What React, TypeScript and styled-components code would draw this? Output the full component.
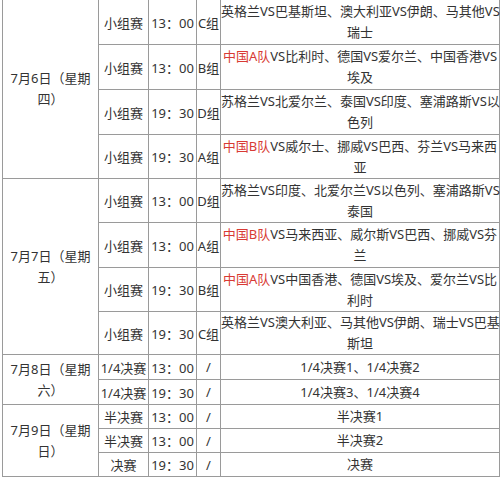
import React from "react";
import styled, { createGlobalStyle } from "styled-components";

const Global = createGlobalStyle`
  html, body { margin: 0; padding: 0; background: #ffffff; }
  body { font-family: "Noto Sans", "Noto Sans CJK SC", sans-serif; }
`;

const Table = styled.table`
  border-collapse: collapse;
  table-layout: fixed;
  width: 497px;
  margin: -1px 0 0 2px;
  font-family: "Noto Sans", "Noto Sans CJK SC", sans-serif;
  font-size: 13px;
  color: #333333;
`;

const Row = styled.tr<{ $h: number }>`
  height: ${(p) => p.$h}px;
`;

const Cell = styled.td`
  border: 1px solid #9a9a9a;
  padding: 0;
  text-align: center;
  vertical-align: middle;
  white-space: nowrap;
  overflow: visible;
  font-size: 13px;
`;

const Line = styled.div`
  display: block;
  height: 21px;
  line-height: 21px;
`;

const Red = styled.span`
  color: #d83a34;
`;

type Match = {
  stage: string;
  time: string;
  group: string;
  lines: React.ReactNode[];
  h: number;
};

type Day = { date: [string, string]; matches: Match[] };

const days: Day[] = [
  {
    date: ["7月6日（星期", "四）"],
    matches: [
      { stage: "小组赛", time: "13：00", group: "C组", h: 45, lines: ["英格兰VS巴基斯坦、澳大利亚VS伊朗、马其他VS", "瑞士"] },
      { stage: "小组赛", time: "13：00", group: "B组", h: 45, lines: [<><Red>中国A队</Red>VS比利时、德国VS爱尔兰、中国香港VS</>, "埃及"] },
      { stage: "小组赛", time: "19：30", group: "D组", h: 45, lines: ["苏格兰VS北爱尔兰、泰国VS印度、塞浦路斯VS以", "色列"] },
      { stage: "小组赛", time: "19：30", group: "A组", h: 44, lines: [<><Red>中国B队</Red>VS威尔士、挪威VS巴西、芬兰VS马来西</>, "亚"] },
    ],
  },
  {
    date: ["7月7日（星期", "五）"],
    matches: [
      { stage: "小组赛", time: "13：00", group: "D组", h: 44, lines: ["苏格兰VS印度、北爱尔兰VS以色列、塞浦路斯VS", "泰国"] },
      { stage: "小组赛", time: "13：00", group: "A组", h: 45, lines: [<><Red>中国B队</Red>VS马来西亚、威尔斯VS巴西、挪威VS芬</>, "兰"] },
      { stage: "小组赛", time: "19：30", group: "B组", h: 44, lines: [<><Red>中国A队</Red>VS中国香港、德国VS埃及、爱尔兰VS比</>, "利时"] },
      { stage: "小组赛", time: "19：30", group: "C组", h: 43, lines: ["英格兰VS澳大利亚、马其他VS伊朗、瑞士VS巴基", "斯坦"] },
    ],
  },
  {
    date: ["7月8日（星期", "六）"],
    matches: [
      { stage: "1/4决赛", time: "13：00", group: "/", h: 25, lines: ["1/4决赛1、1/4决赛2"] },
      { stage: "1/4决赛", time: "19：30", group: "/", h: 25, lines: ["1/4决赛3、1/4决赛4"] },
    ],
  },
  {
    date: ["7月9日（星期", "日）"],
    matches: [
      { stage: "半决赛", time: "13：00", group: "/", h: 24, lines: ["半决赛1"] },
      { stage: "半决赛", time: "13：00", group: "/", h: 24, lines: ["半决赛2"] },
      { stage: "决赛", time: "19：30", group: "/", h: 24, lines: ["决赛"] },
    ],
  },
];

const Lines: React.FC<{ lines: React.ReactNode[] }> = ({ lines }) => (
  <>
    {lines.map((l, i) => (
      <Line key={i}>{l}</Line>
    ))}
  </>
);

export default function App() {
  return (
    <>
      <Global />
      <Table>
        <colgroup>
          <col style={{ width: 96 }} />
          <col style={{ width: 50 }} />
          <col style={{ width: 48 }} />
          <col style={{ width: 24 }} />
          <col style={{ width: 279 }} />
        </colgroup>
        <tbody>
          {days.map((d) =>
            d.matches.map((m, i) => (
              <Row key={d.date[0] + i} $h={m.h}>
                {i === 0 && (
                  <Cell rowSpan={d.matches.length}>
                    <Lines lines={d.date} />
                  </Cell>
                )}
                <Cell>{m.stage}</Cell>
                <Cell>{m.time}</Cell>
                <Cell>{m.group}</Cell>
                <Cell>
                  <Lines lines={m.lines} />
                </Cell>
              </Row>
            ))
          )}
        </tbody>
      </Table>
    </>
  );
}
